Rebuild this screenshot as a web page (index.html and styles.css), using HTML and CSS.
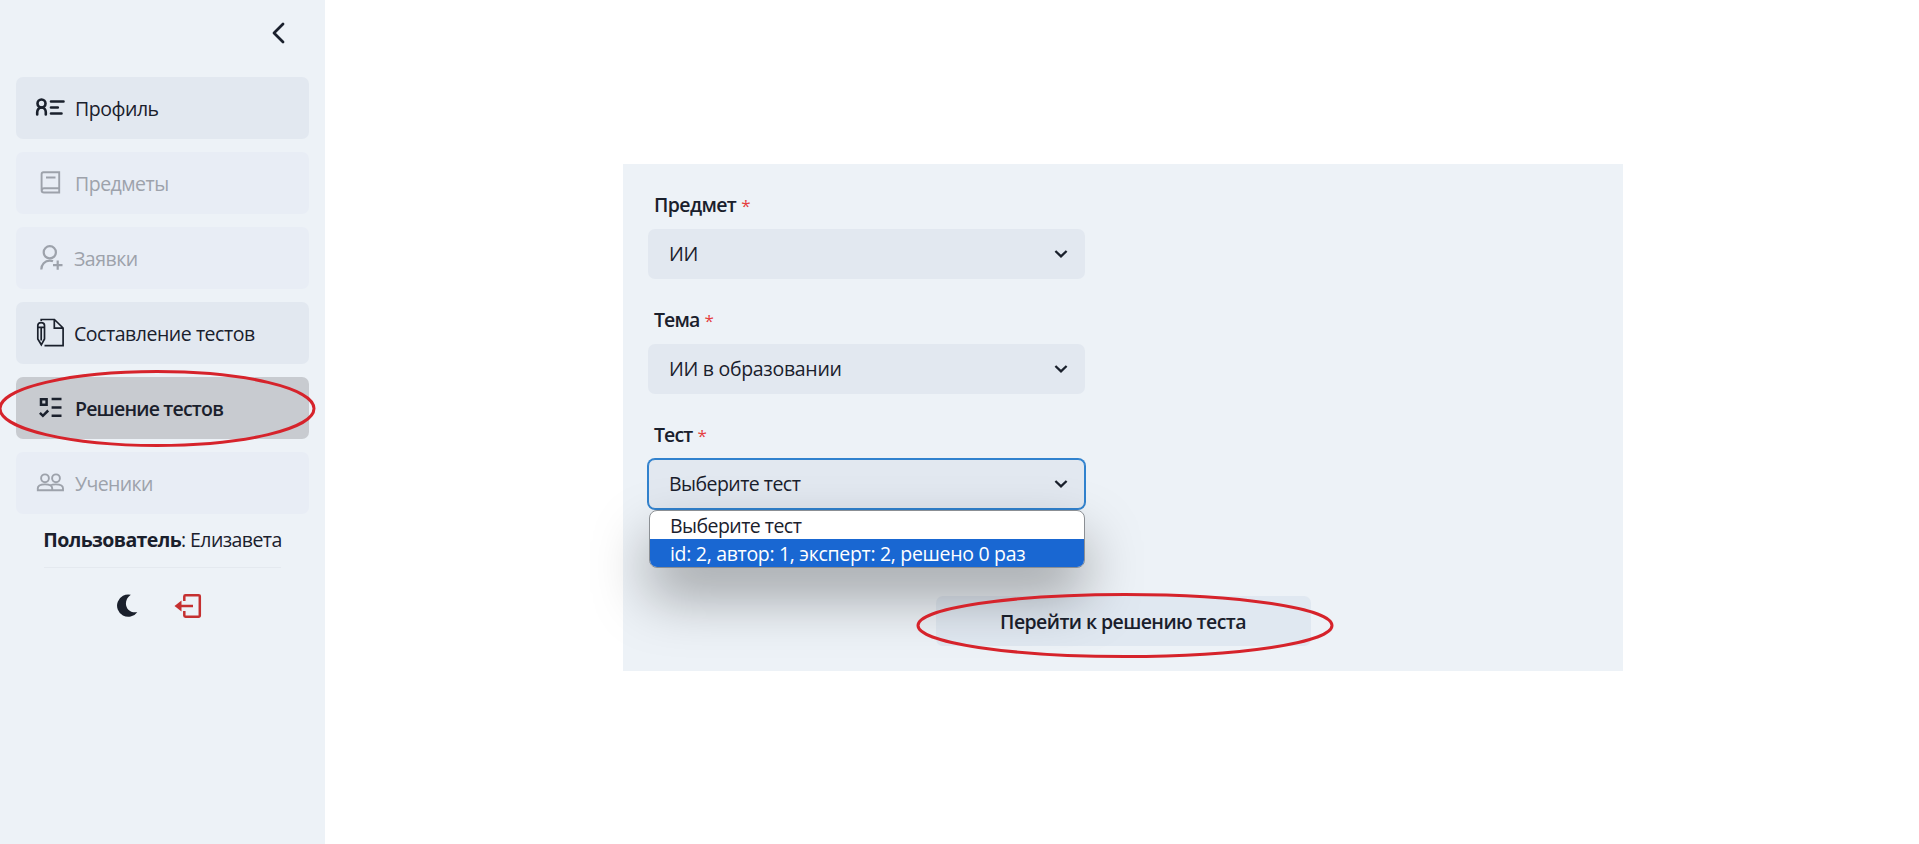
FILE: index.html
```
<!DOCTYPE html>
<html lang="ru">
<head>
<meta charset="utf-8">
<title>Решение тестов</title>
<link rel="stylesheet" href="styles.css">
</head>
<body>
<div class="app">
  <aside class="sidebar">
    <div class="collapse">
      <svg width="14" height="22" viewBox="0 0 14 22"><path d="M12 2 3 11l9 9" fill="none" stroke="currentColor" stroke-width="2.800" stroke-linecap="round" stroke-linejoin="round"/></svg>
    </div>
    <nav class="nav">
      <a class="item"><svg class="icon" viewBox="0 0 30 30" fill="none" stroke="currentColor" stroke-width="2.600" stroke-linecap="round"><circle cx="6.500" cy="10.500" r="4"/><path d="M2.200 21.500v-2.200c0-2.600 1.800-4.800 4.300-4.800s4.300 2.200 4.300 4.800v2.200M16 8.500h12.500M16 14.500h6.800M16 20.500h10.500"/></svg><span class="t-profile">Профиль</span></a>
      <a class="item off"><svg class="icon" viewBox="0 0 30 30" fill="none" stroke="currentColor" stroke-width="1.900"><path d="M8.500 4.200h15.700v20.300H9c-1.600 0-2.400-1-2.400-2.300V6.200c0-1.200.7-2 1.900-2zM6.800 22.600c.1-1.500 1-2.300 2.300-2.300h15.100M11 9.500h9.500"/></svg><span class="t-subjects">Предметы</span></a>
      <a class="item off shifted"><svg class="icon" viewBox="0 0 30 30" fill="none" stroke="currentColor" stroke-width="2.200"><circle cx="14.800" cy="9.300" r="6.100"/><path d="M6.300 26.500c0-5 3.500-8.800 8.500-8.800 1.200 0 2.300.2 3.200.6M22.700 17.500v9.300M18 22.200h9.500"/></svg><span class="t-requests">Заявки</span></a>
      <a class="item shifted"><svg class="icon" viewBox="0 0 30 30" fill="none" stroke="currentColor" stroke-width="1.700"><path d="M6.200 3V1.500h13.200l8.700 8.500v17.700H9.500M19.300 1.500v8.700h8.700"/><path d="M2.800 7.500c0-2 1.100-2.800 3.300-2.800s3.400.8 3.400 2.800V21l-3.200 5.800L2.800 21zM2.800 9.300h6.700M6.200 9.500v13"/></svg><span class="t-compose">Составление тестов</span></a>
      <a class="item active"><svg class="icon" viewBox="0 0 30 30" fill="none" stroke="currentColor" stroke-width="2.500"><path d="M6 6.200h5.600v5.600H6zM16.600 6h9.900M16.600 14.500h9.900M16.600 22.700h9.900M4.900 19.800l3 3 5.300-5.300"/></svg><span class="t-solve">Решение тестов</span></a>
      <a class="item off"><svg class="icon" viewBox="0 0 30 30" fill="none" stroke="currentColor" stroke-width="1.900"><circle cx="10" cy="10.300" r="3.900"/><circle cx="21" cy="10.300" r="3.900"/><path d="M2.800 22.300v-2c0-2.600 3.400-3.900 7.200-3.900s7.200 1.300 7.200 3.900v2zM15.200 17.500c1.500-.8 3.500-1.100 5.600-1.100 3.800 0 7.200 1.300 7.200 3.900v2H17.200"/></svg><span class="t-students">Ученики</span></a>
    </nav>
    <div class="user"><span class="who"><b class="t-user">Пользователь</b><span class="t-name">: Елизавета</span></span></div>
    <div class="tools">
      <svg width="22" height="24" viewBox="0 0 22 24"><path d="M14.800 .7A11.200 11.200 0 1 0 21.300 18.200C10 20 5.800 7 14.800 .7z" fill="#1a202c"/></svg>
      <svg width="28" height="26" viewBox="0 0 28 26" fill="none" stroke="#c53030" stroke-width="2.500"><path d="M10.300 8V3.500c0-.8.4-1.200 1.200-1.200h13c.8 0 1.300.4 1.300 1.200v19c0 .8-.5 1.200-1.300 1.200h-13c-.8 0-1.200-.4-1.200-1.200V18M19 13H5"/><path d="M.5 13l7-5.500v11z" fill="#c53030" stroke="none"/></svg>
    </div>
  </aside>
  <main class="main">
    <section class="panel">
      <div class="field">
        <div class="label"><span class="t-l1">Предмет</span> <i>*</i></div>
        <div class="select"><span class="t-s1">ИИ</span><svg class="chev" viewBox="0 0 14 10"><path d="M1.400 2 7 7.400 12.600 2" fill="none" stroke="currentColor" stroke-width="2.300"/></svg></div>
      </div>
      <div class="field">
        <div class="label"><span class="t-l2">Тема</span> <i>*</i></div>
        <div class="select"><span class="t-s2">ИИ в образовании</span><svg class="chev" viewBox="0 0 14 10"><path d="M1.400 2 7 7.400 12.600 2" fill="none" stroke="currentColor" stroke-width="2.300"/></svg></div>
      </div>
      <div class="field">
        <div class="label"><span class="t-l3">Тест</span> <i>*</i></div>
        <div class="select focus"><span class="t-s3">Выберите тест</span><svg class="chev" viewBox="0 0 14 10"><path d="M1.400 2 7 7.400 12.600 2" fill="none" stroke="currentColor" stroke-width="2.300"/></svg>
          <div class="menu"><div class="opt"><span class="t-s3">Выберите тест</span></div><div class="opt sel"><span class="t-opt">id: 2, автор: 1, эксперт: 2, решено 0 раз</span></div></div>
        </div>
      </div>
      <button class="go"><span class="t-go">Перейти к решению теста</span></button>
    </section>
  </main>
  <svg class="marks" viewBox="0 0 1919 844" fill="none" stroke="#d6232b" stroke-width="3"><ellipse cx="157" cy="408.500" rx="157" ry="37"/><ellipse cx="1125" cy="625.500" rx="207" ry="31"/></svg>
</div>
</body>
</html>
```
FILE: styles.css
```
* { box-sizing: border-box; }
body { margin: 0; background: #fff; color: #1a202c; font-family: "Open Sans", "Noto Sans", sans-serif; font-size: 19.5px; line-height: 30px; }
.app { position: relative; display: flex; width: 1919px; height: 844px; overflow: hidden; }
.sidebar { width: 325px; background: #edf2f7; padding: 0 16px; }
.collapse { height: 77px; padding: 22px 24px 0 0; display: flex; justify-content: flex-end; }
.collapse svg { display: block; }
.nav { display: flex; flex-direction: column; gap: 13px; }
.item { height: 62px; border-radius: 7px; background: #e2e8f0; display: flex; align-items: center; padding: 1px 0 0 19px; gap: 10px; white-space: nowrap; }
.item.shifted { gap: 9px; }
.item.off { background: #e8edf5; color: #9da2ab; }
.item.active { background: #c8cbd0; font-weight: 600; }
.icon { width: 30px; height: 30px; flex: none; margin-top: -2px; }
.t-profile, .t-compose { letter-spacing: -.46px; }
.t-subjects, .t-requests { letter-spacing: -.5px; }
.t-solve { letter-spacing: -.8px; }
.t-students { letter-spacing: -.6px; }
.t-user { letter-spacing: -.6px; }
.t-name { letter-spacing: -.58px; }
.t-l1 { letter-spacing: -.6px; }
.t-l2, .t-l3 { letter-spacing: -.9px; }
.t-s1, .t-s2 { letter-spacing: -.3px; }
.t-s3 { letter-spacing: -.54px; }
.t-opt { letter-spacing: -.31px; }
.t-go { letter-spacing: -.58px; }
.user { display: flex; justify-content: center; height: 54px; padding-top: 11px; margin: 0 28px 0 28px; border-bottom: 1px solid #e4e9ef; white-space: nowrap; }
.tools { display: flex; gap: 36px; padding: 25px 0 0 100px; align-items: center; }
.main { flex: 1; display: flex; justify-content: center; align-items: flex-start; padding: 164px 0 0 2px; }
.panel { width: 1000px; height: 507px; background: #edf2f7; padding: 25px; display: flex; flex-direction: column; gap: 25px; }
.field { width: 437px; }
.label { height: 30px; margin-bottom: 10px; padding: 1px 0 0 6px; font-weight: 600; white-space: nowrap; }
.label i { font-style: normal; color: #e53e3e; font-weight: 400; font-size: 17px; }
.select { position: relative; height: 50px; background: #e2e8f0; border-radius: 7px; padding: 0 17px 0 21px; display: flex; align-items: center; justify-content: space-between; white-space: nowrap; }
.select.focus { box-shadow: 0 0 0 1px #3182ce; border: 1px solid #3182ce; padding: 0 16px 0 20px; }
.chev { width: 14px; height: 10px; }
.menu { position: absolute; left: 0; top: 50px; width: 436px; height: 58px; border: 1px solid #8b8f94; border-radius: 8px; background: #fff; overflow: hidden; box-shadow: 0 28px 56px rgba(0,0,0,.34); }
.opt { height: 28px; line-height: 30px; padding-left: 20px; }
.opt.sel { background: #1967d2; color: #fff; }
.go { font: inherit; font-weight: 600; color: inherit; border: 0; padding: 2px 0 0; width: 375px; height: 50px; margin-top: 62px; flex: none; align-self: center; background: rgba(203,213,230,.36); border-radius: 7px; }
.marks { position: absolute; left: 0; top: 0; width: 1919px; height: 844px; pointer-events: none; }
```
